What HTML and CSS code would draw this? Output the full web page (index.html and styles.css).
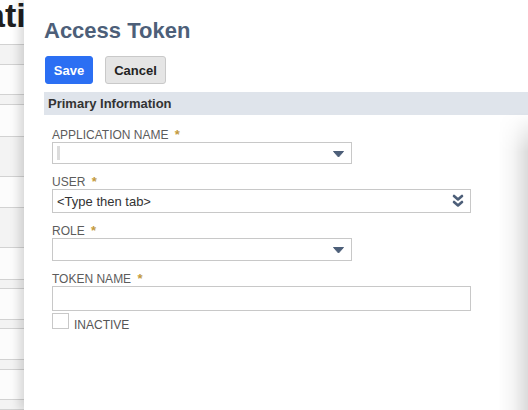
FILE: index.html
```html
<!DOCTYPE html>
<html>
<head>
<meta charset="utf-8">
<link rel="stylesheet" href="styles.css">
</head>
<body>
<div class="bg">
  <div class="bg-title"><span>ati</span></div>
  <div class="bg-row h20 grey"></div>
  <div class="bg-row h30"></div>
  <div class="bg-row h10 grey"></div>
  <div class="bg-row h32"></div>
  <div class="bg-row h40 grey"></div>
  <div class="bg-row h31"></div>
  <div class="bg-row h40 grey"></div>
  <div class="bg-row h32"></div>
  <div class="bg-row h9 grey"></div>
  <div class="bg-row h31"></div>
  <div class="bg-row h9 grey"></div>
  <div class="bg-row h31"></div>
  <div class="bg-row h10 grey"></div>
  <div class="bg-row h30"></div>
  <div class="bg-row h10 grey"></div>
</div>
<div class="modal">
  <h1 class="title">Access Token</h1>
  <div class="actions">
    <button class="btn btn-primary">Save</button>
    <button class="btn btn-secondary">Cancel</button>
  </div>
  <div class="band">Primary Information</div>
  <div class="form">
    <div class="field">
      <div class="label">APPLICATION NAME <span class="req">*</span></div>
      <div class="input select w300 h22"><span class="caret-bar"></span>
        <svg class="tri" width="11" height="7" viewBox="0 0 11 7"><polygon points="0.5,0.5 10.5,0.5 5.5,6" fill="#4d5f79" stroke="#4d5f79" stroke-linejoin="round"/></svg>
      </div>
    </div>
    <div class="field">
      <div class="label">USER <span class="req">*</span></div>
      <div class="input select w419 h24"><span class="ph">&lt;Type then tab&gt;</span>
        <svg class="dbl" width="12" height="14" viewBox="0 0 12 14"><path d="M2 2 L6 5.5 L10 2 M2 8 L6 11.5 L10 8" fill="none" stroke="#4d5f79" stroke-width="2.6" stroke-linecap="round" stroke-linejoin="round"/></svg>
      </div>
    </div>
    <div class="field">
      <div class="label">ROLE <span class="req">*</span></div>
      <div class="input select w300 h23">
        <svg class="tri" width="11" height="7" viewBox="0 0 11 7"><polygon points="0.5,0.5 10.5,0.5 5.5,6" fill="#4d5f79" stroke="#4d5f79" stroke-linejoin="round"/></svg>
      </div>
    </div>
    <div class="field f-last">
      <div class="label">TOKEN NAME <span class="req">*</span></div>
      <div class="input w419 h25"></div>
    </div>
    <div class="check-row">
      <span class="checkbox"></span>
      <span class="check-label">INACTIVE</span>
    </div>
  </div>
  <div class="edge-shadow"></div>
</div>
</body>
</html>
```
FILE: styles.css
```css
html, body {
  margin: 0;
  padding: 0;
}
body {
  width: 528px;
  height: 410px;
  overflow: hidden;
  display: flex;
  font-family: "Liberation Sans", Arial, sans-serif;
  background: #fff;
}
.bg {
  width: 24px;
  flex: none;
  overflow: hidden;
  background: #fcfcfc;
}
.bg-title {
  height: 44px;
  border-bottom: 1px solid #d2d2d2;
  overflow: hidden;
  white-space: nowrap;
  background: #fff;
}
.bg-title span {
  display: block;
  margin-left: -14px;
  margin-top: -2px;
  font-size: 34px;
  line-height: 34px;
  font-weight: bold;
  color: #1f1f1f;
}
.bg-row {
  border-bottom: 1px solid #d2d2d2;
  box-sizing: border-box;
  background: #fcfcfc;
}
.bg-row.grey { background: #f3f3f3; }
.h9 { height: 9px; }
.h10 { height: 10px; }
.h20 { height: 20px; }
.h30 { height: 30px; }
.h31 { height: 31px; }
.h32 { height: 32px; }
.h40 { height: 40px; }

.modal {
  flex: 1;
  position: relative;
  background: #fff;
  padding: 20px 0 0 20px;
  box-shadow: -5px 0 9px rgba(0, 0, 0, 0.14);
}
.title {
  margin: 0;
  font-size: 22px;
  line-height: 22px;
  font-weight: bold;
  color: #4d5f79;
}
.actions {
  margin-top: 14px;
  display: flex;
  gap: 12px;
  padding-left: 1px;
}
.btn {
  height: 28px;
  box-sizing: border-box;
  font-family: "Liberation Sans", Arial, sans-serif;
  font-size: 13px;
  font-weight: bold;
  border-radius: 3px;
  padding: 0;
  cursor: pointer;
}
.btn-primary {
  width: 48px;
  background: #2b6ff3;
  color: #fff;
  border: 1px solid #2b6ff3;
}
.btn-secondary {
  width: 61px;
  background: #e5e5e5;
  color: #222;
  border: 1px solid #c9c9c9;
}
.band {
  margin-top: 8px;
  height: 23px;
  line-height: 23px;
  background: #dfe4eb;
  padding-left: 4px;
  font-size: 13px;
  font-weight: bold;
  color: #333;
}
.form {
  padding: 13px 0 0 8px;
}
.field {
  margin-bottom: 11px;
}
.field.f-last {
  margin-bottom: 2px;
}
.label {
  font-size: 12px;
  line-height: 14px;
  color: #5c5c5c;
}
.req {
  color: #c39a3e;
  margin-left: 3px;
  font-size: 13px;
  font-weight: bold;
}
.input {
  box-sizing: border-box;
  border: 1px solid #c8c8c8;
  background: #fff;
  position: relative;
  display: flex;
  align-items: center;
  padding-left: 4px;
}
.w300 { width: 300px; }
.w419 { width: 419px; }
.h22 { height: 22px; }
.h23 { height: 23px; }
.h24 { height: 24px; }
.h25 { height: 25px; }
.caret-bar {
  width: 3px;
  height: 14px;
  background: #dcdcdc;
}
.ph {
  font-size: 13px;
  color: #333;
}
.tri {
  position: absolute;
  right: 7px;
  top: 8px;
}
.dbl {
  position: absolute;
  right: 6px;
  top: 4px;
}
.check-row {
  display: flex;
  align-items: flex-end;
  gap: 5px;
}
.checkbox {
  width: 17px;
  height: 16px;
  box-sizing: border-box;
  border: 1px solid #c8c8c8;
  background: #fff;
}
.check-label {
  font-size: 12px;
  line-height: 12px;
  color: #555;
  margin-bottom: -2px;
}
.edge-shadow {
  position: absolute;
  right: 0;
  top: 112px;
  bottom: 0;
  width: 30px;
  background: linear-gradient(to right, rgba(0,0,0,0) 0%, rgba(0,0,0,0.04) 50%, rgba(0,0,0,0.14) 100%);
  -webkit-mask-image: linear-gradient(to bottom, transparent 0, #000 40px);
  mask-image: linear-gradient(to bottom, transparent 0, #000 40px);
}
```
